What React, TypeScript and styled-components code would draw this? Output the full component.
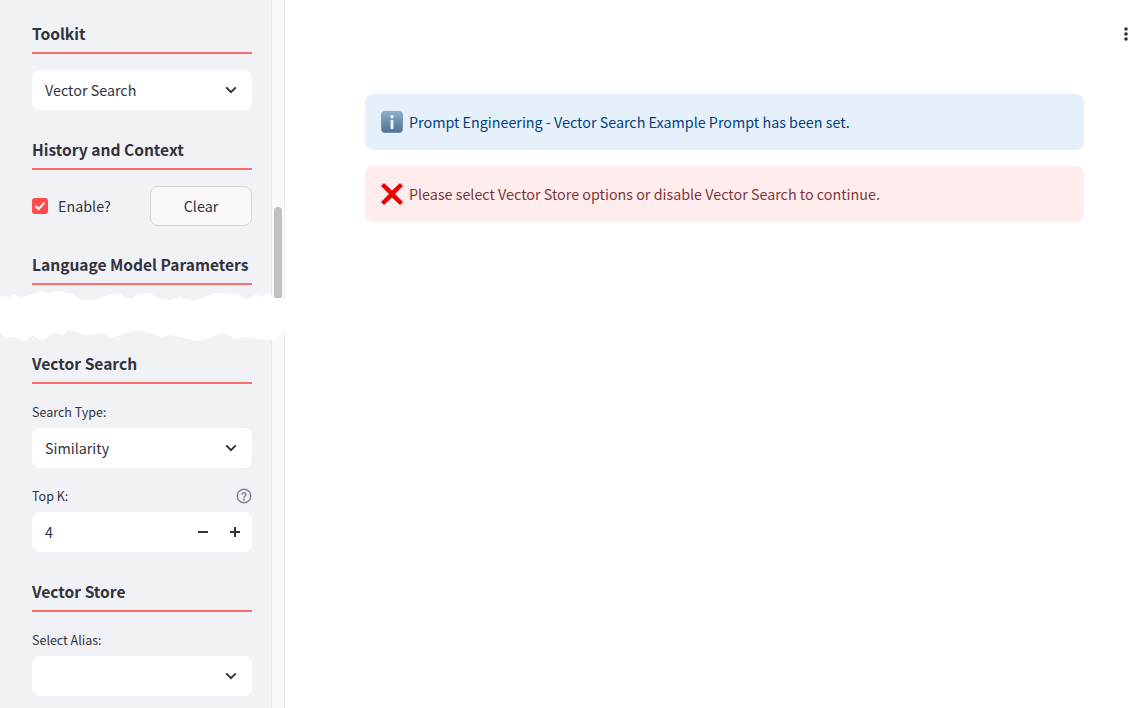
import React from "react";
import styled, { createGlobalStyle } from "styled-components";

const Global = createGlobalStyle`
  html, body { margin: 0; padding: 0; background: #fff; }
  body { font-family: "Noto Sans CJK SC", "Noto Sans", sans-serif; color: #31333f; }
  * { box-sizing: border-box; }
`;

const Page = styled.div`
  display: flex;
  width: 100%;
  height: 708px;
  overflow: hidden;
  position: relative;
`;

const Sidebar = styled.aside`
  display: flex;
  flex: 0 0 285px;
  height: 100%;
`;

const SidebarBody = styled.div`
  flex: 0 0 271px;
  min-width: 0;
  background: #f0f2f6;
  padding: 22px 19px 0 32px;
`;

const ScrollTrack = styled.div`
  flex: 0 0 14px;
  background: #fafafa;
  border-left: 1px solid #e8e8e8;
  border-right: 1px solid #ececec;
  padding: 207px 0 0 2px;
`;

const ScrollThumb = styled.div`
  width: 8px;
  height: 92px;
  border-radius: 4px;
  background: #c1c1c1;
`;

const Section = styled.section<{ $gap?: number }>`
  margin-top: ${(p) => p.$gap ?? 28}px;
  &:first-child { margin-top: 0; }
`;

const Heading = styled.h3`
  margin: 0;
  height: 30px;
  padding-bottom: 7px;
  font-size: 15.55px;
  line-height: 23px;
  font-weight: 600;
  color: #31333f;
  white-space: nowrap;
`;

const Rule = styled.div`
  height: 2px;
  background: #ff6c6c;
`;

const SectionBody = styled.div`
  margin-top: 16px;
`;

const Field = styled.div`
  margin-top: 18px;
`;

const LabelRow = styled.div`
  display: flex;
  justify-content: space-between;
  align-items: center;
  height: 20px;
  margin-bottom: 6px;
  font-size: 12.5px;
  line-height: 20px;
`;

const Control = styled.div`
  display: flex;
  align-items: center;
  justify-content: space-between;
  height: 40px;
  padding: 0 15px 0 13px;
  background: #fff;
  border-radius: 8px;
  font-size: 14.32px;
`;

const ControlText = styled.span`
  line-height: 20px;
`;

const NumberControl = styled(Control)`
  padding-right: 1px;
`;

const Steppers = styled.div`
  display: flex;
`;

const Stepper = styled.button`
  display: flex;
  align-items: center;
  justify-content: center;
  width: 32px;
  height: 38px;
  padding: 0;
  border: 0;
  background: transparent;
  color: #31333f;
`;

const CheckRow = styled.div`
  display: flex;
  align-items: center;
  justify-content: space-between;
`;

const CheckLabel = styled.label`
  display: flex;
  align-items: center;
  gap: 10px;
  font-size: 14.32px;
`;

const CheckText = styled.span`
  line-height: 20px;
`;

const CheckBox = styled.span`
  display: flex;
  align-items: center;
  justify-content: center;
  width: 16px;
  height: 16px;
  border-radius: 3px;
  background: #ff4b4b;
`;

const ClearButton = styled.button`
  width: 102px;
  height: 40px;
  padding: 0 0 1px;
  border: 1px solid #d5d6da;
  border-radius: 8px;
  background: #f9f9fb;
  color: #31333f;
  font: inherit;
  font-size: 14.32px;
`;

const Tear = styled.svg`
  position: absolute;
  left: 0;
  top: 285px;
  width: 290px;
  height: 60px;
`;

const Main = styled.main`
  flex: 1;
  min-width: 0;
  padding-right: 63px;
  padding-left: 80px;
`;

const Toolbar = styled.div`
  display: flex;
  justify-content: flex-end;
  height: 94px;
  padding-top: 24px;
  margin-right: -50px;
`;

const Alert = styled.div<{ $kind: "info" | "error" }>`
  display: flex;
  align-items: center;
  gap: 6px;
  height: 56px;
  margin-bottom: 16px;
  padding: 0 16px;
  border-radius: 8px;
  font-size: 14.32px;
  background: ${(p) => (p.$kind === "info" ? "#e6f0fb" : "#ffeded")};
  color: ${(p) => (p.$kind === "info" ? "#004280" : "#7d353b")};
`;

const AlertText = styled.span`
  line-height: 20px;
`;

const Chevron = () => (
  <svg width="12" height="8" viewBox="0 0 12 8" fill="none">
    <path d="M1.2 1.4 6 6.2l4.8-4.8" stroke="#31333f" strokeWidth="2" />
  </svg>
);

const Select = ({ value }: { value?: string }) => (
  <Control>
    <ControlText>{value}</ControlText>
    <Chevron />
  </Control>
);

const HelpIcon = () => (
  <svg width="16" height="16" viewBox="0 0 16 16" fill="none" stroke="#808495" strokeWidth="1.4">
    <circle cx="8" cy="8" r="6.8" />
    <path d="M5.9 6.2a2.1 2.1 0 0 1 4.1.5c0 1.3-2 1.6-2 2.8" strokeLinecap="round" />
    <circle cx="8" cy="11.6" r=".4" fill="#808495" />
  </svg>
);

const InfoIcon = () => (
  <svg width="22" height="22" viewBox="0 0 22 22">
    <defs>
      <linearGradient id="infoFill" x1="0" y1="0" x2="0" y2="1">
        <stop offset="0" stopColor="#8fb0cc" />
        <stop offset="0.5" stopColor="#6b8fb0" />
        <stop offset="1" stopColor="#4f7192" />
      </linearGradient>
    </defs>
    <rect x="0.3" y="0.3" width="21.4" height="21.4" rx="4" fill="url(#infoFill)" stroke="#6f8aa3" strokeWidth=".6" />
    <rect x="9.6" y="9" width="2.8" height="9" fill="#eef3f8" />
    <circle cx="11" cy="5.8" r="1.7" fill="#eef3f8" />
  </svg>
);

const CrossIcon = () => (
  <svg width="22" height="22" viewBox="0 0 22 22">
    <path d="M3 0 11 7.6 19 0l3 3-8 8 8 8-3 3-8-7.6L3 22l-3-3 8-8-8-8z" fill="#ee0000" />
  </svg>
);

const tearTop = [
  [0, 296], [10, 297], [15, 294], [20, 298], [30, 295], [40, 291], [48, 293], [58, 291], [72, 294], [82, 300],
  [97, 300], [100, 298], [113, 294], [120, 294], [125, 298], [133, 298], [138, 294], [150, 293], [157, 298],
  [170, 300], [180, 297], [192, 301], [203, 298], [213, 293], [237, 294], [247, 300], [257, 294], [263, 297],
  [268, 293], [275, 298], [290, 298],
];
const tearBottom = [
  [290, 332], [283, 332], [270, 340], [257, 339], [247, 337], [235, 339], [228, 335], [222, 333], [210, 338],
  [197, 341], [180, 337], [170, 335], [160, 337], [150, 333], [140, 330], [127, 332], [113, 338], [107, 335],
  [100, 333], [93, 335], [83, 335], [78, 332], [68, 330], [62, 335], [53, 332], [47, 338], [42, 341], [32, 335],
  [27, 340], [22, 341], [17, 337], [5, 338], [0, 332],
];
const tearPoints = [...tearTop, ...tearBottom].map(([x, y]) => `${x},${y - 285}`).join(" ");

export default function App() {
  return (
    <Page>
      <Global />
      <Sidebar>
        <SidebarBody>
          <Section>
            <Heading>Toolkit</Heading>
            <Rule />
            <SectionBody>
              <Select value="Vector Search" />
            </SectionBody>
          </Section>
          <Section>
            <Heading>History and Context</Heading>
            <Rule />
            <SectionBody>
              <CheckRow>
                <CheckLabel>
                  <CheckBox>
                    <svg width="12" height="10" viewBox="0 0 12 10" fill="none">
                      <path d="M1.5 5 4.6 8 10.5 1.8" stroke="#fff" strokeWidth="2" />
                    </svg>
                  </CheckBox>
                  <CheckText>Enable?</CheckText>
                </CheckLabel>
                <ClearButton>Clear</ClearButton>
              </CheckRow>
            </SectionBody>
          </Section>
          <Section $gap={27}>
            <Heading>Language Model Parameters</Heading>
            <Rule />
          </Section>
          <Section $gap={67}>
            <Heading>Vector Search</Heading>
            <Rule />
            <Field>
              <LabelRow>Search Type:</LabelRow>
              <Select value="Similarity" />
            </Field>
            <Field>
              <LabelRow>
                Top K:
                <HelpIcon />
              </LabelRow>
              <NumberControl>
                <ControlText>4</ControlText>
                <Steppers>
                  <Stepper aria-label="Decrease">
                    <svg width="10" height="2" viewBox="0 0 10 2"><rect width="10" height="2" fill="#31333f" /></svg>
                  </Stepper>
                  <Stepper aria-label="Increase">
                    <svg width="10" height="10" viewBox="0 0 10 10"><path d="M4 0h2v4h4v2H6v4H4V6H0V4h4z" fill="#31333f" /></svg>
                  </Stepper>
                </Steppers>
              </NumberControl>
            </Field>
          </Section>
          <Section>
            <Heading>Vector Store</Heading>
            <Rule />
            <Field>
              <LabelRow>Select Alias:</LabelRow>
              <Select />
            </Field>
          </Section>
        </SidebarBody>
        <ScrollTrack>
          <ScrollThumb />
        </ScrollTrack>
      </Sidebar>
      <Main>
        <Toolbar>
          <svg width="16" height="20" viewBox="0 0 16 20" fill="#31333f">
            <circle cx="8" cy="5" r="1.8" />
            <circle cx="8" cy="10" r="1.8" />
            <circle cx="8" cy="15" r="1.8" />
          </svg>
        </Toolbar>
        <Alert $kind="info">
          <InfoIcon />
          <AlertText>Prompt Engineering - Vector Search Example Prompt has been set.</AlertText>
        </Alert>
        <Alert $kind="error">
          <CrossIcon />
          <AlertText>Please select Vector Store options or disable Vector Search to continue.</AlertText>
        </Alert>
      </Main>
      <Tear viewBox="0 0 290 60" aria-hidden="true">
        <polygon points={tearPoints} fill="#fff" />
      </Tear>
    </Page>
  );
}
